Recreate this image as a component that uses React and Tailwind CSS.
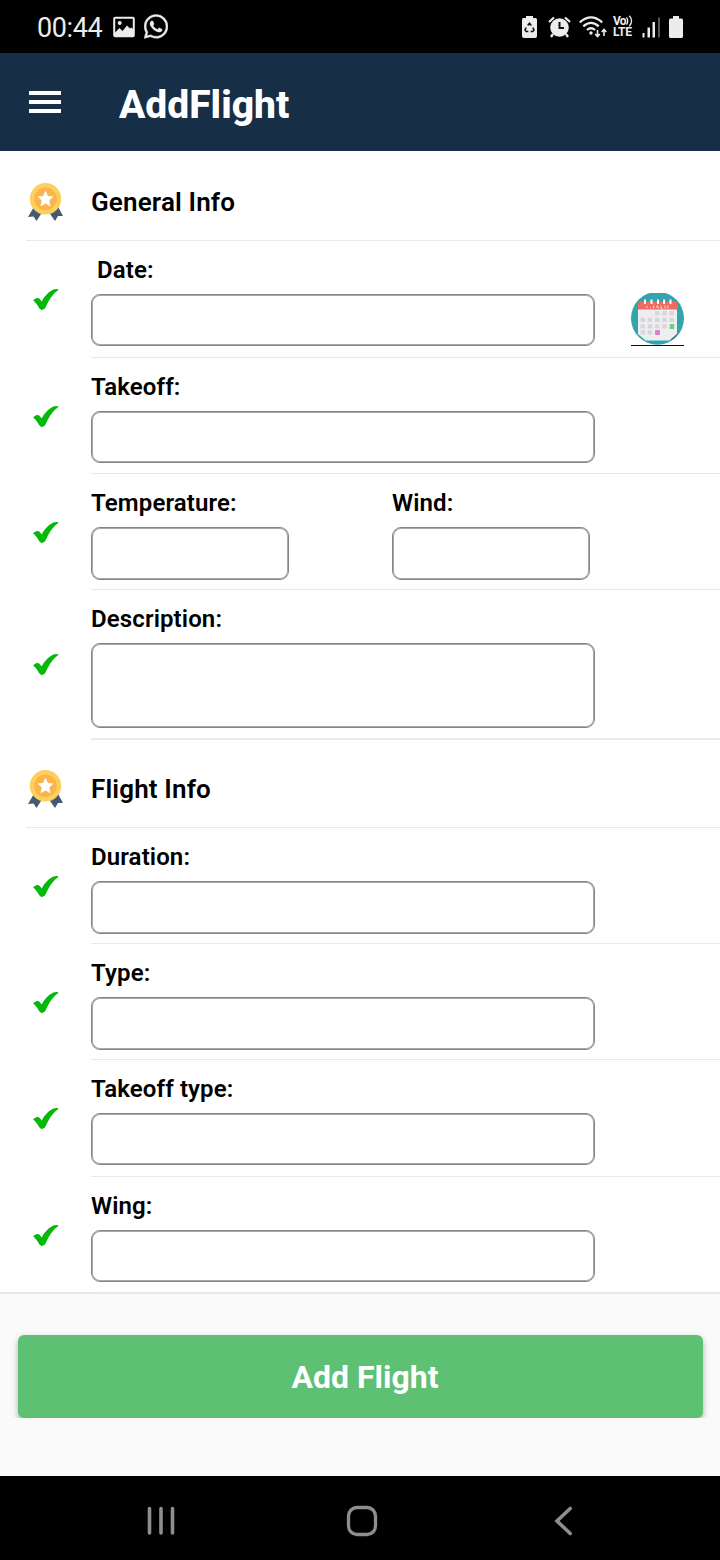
import React from "react";

function Medal() {
  return (
    <svg className="block h-[40px] w-[38px]" viewBox="0 0 38 40">
      <path d="M8 23 L1 35 L6.500 34.500 L9.500 39 L16 29Z M30 23 L36 34 L31 34 L28 39 L21 29Z" fill="#425b70" />
      <circle cx="18.500" cy="16.800" r="15.700" fill="#fdcf5c" />
      <circle cx="18.500" cy="16.800" r="11.300" fill="#f9b54c" />
      <path d="M18.500 8.500 L20.900 13.900 L26.500 14.500 L22.300 18.400 L23.500 24.500 L18.500 21.500 L13.500 24.500 L14.700 18.400 L10.500 14.500 L16.100 13.900Z" fill="#fff" />
    </svg>
  );
}

function Check() {
  return (
    <svg className="block h-[22px] w-[26px]" viewBox="0 0 26 22">
      <path d="M0 11.200 L3.500 9 L6 9.300 L8.800 12.500 C12 6 17 1.800 21 0.300 L25.300 0 L25 1.200 C20.500 4.500 18 8 15.500 12.500 C14 15.500 12.800 17.500 12 19.500 L8.500 21.200 L6 19 C5 16 2.500 13.500 0 11.200Z" fill="#06b80a" />
    </svg>
  );
}

const DAYS = [
  [24, 18], [31.3, 18], [38.5, 18],
  [9.500, 24.700], [16.700, 24.700], [24, 24.700], [31.300, 24.700], [38.500, 24.700],
  [9.500, 31.200], [16.700, 31.200], [24, 31.200], [31.300, 31.200],
  [9.500, 37.300], [16.700, 37.300],
];

function Calendar() {
  return (
    <svg className="block h-[53px] w-[53px]" viewBox="0 0 53 53">
      <circle cx="26.500" cy="25.300" r="26.500" fill="#32a4ac" />
      <path d="M7 16 H46 V41 L38.500 47.500 H14.500 L7 41Z" fill="#eeeef0" />
      <path d="M46.500 40 Q44 46 38.500 47.500 L43.500 43.500Z" fill="#4b5060" />
      <path d="M9 8.500 H44 Q46.500 8.500 46.500 11 V16.500 H7 V11 Q7 8.500 9 8.500Z" fill="#ee6b62" />
      <path d="M14 6.500 V11 M20.500 6.500 V11 M27 6.500 V11 M33 6.500 V11 M39.500 6.500 V11" stroke="#fff" strokeWidth="2" />
      <path d="M16 13 V15 M19 14.800 H20 M22.500 12.500 V15.500 M25 15 L26.500 12.500 L27.500 15.500 M30 12.500 V15.500 H31.500 M34 12.500 V15.500 M37 12.500 V15.500" stroke="#fbd5d1" strokeWidth="1" fill="none" />
      {DAYS.map(([x, y]) => (
        <rect key={`${x}-${y}`} x={x} y={y} width="4.500" height="4.300" rx="0.500" fill="#d7d6d8" />
      ))}
      <rect x="38.700" y="31" width="4.500" height="5" fill="#71cd83" />
      <rect x="24" y="37" width="5" height="5" rx="0.800" fill="#dc82bd" />
      <rect x="0" y="52" width="53" height="1" fill="#111" />
    </svg>
  );
}

function StatusBar() {
  return (
    <div className="flex h-[53px] items-center bg-black pl-[37px]">
      <span className="w-[76px] pt-[3px] text-[27px] leading-none tracking-[-0.4px] text-[#ececec]">00:44</span>
      <svg className="block h-[22px] w-[22px]" viewBox="0 0 22 22">
        <rect x="1.200" y="1.700" width="19.600" height="18.600" rx="1" fill="none" stroke="#ececec" strokeWidth="2" />
        <circle cx="6.700" cy="7" r="2" fill="#ececec" />
        <path d="M1.500 17 L6.500 12 L9.500 15 L14 9.500 L17 12.500 L18.500 11.500 L21 14 V20 H1.500Z" fill="#ececec" />
      </svg>
      <svg className="ml-[9px] block h-[25px] w-[24px]" viewBox="0 0 24 24" fill="#ececec" stroke="#ececec" strokeWidth="0.400">
        <path d="M17.472 14.382c-.297-.149-1.758-.867-2.030-.967-.273-.099-.471-.148-.670.150-.197.297-.767.966-.940 1.164-.173.199-.347.223-.644.075-.297-.150-1.255-.463-2.390-1.475-.883-.788-1.480-1.761-1.653-2.059-.173-.297-.018-.458.130-.606.134-.133.298-.347.446-.520.149-.174.198-.298.298-.497.099-.198.050-.371-.025-.520-.075-.149-.669-1.612-.916-2.207-.242-.579-.487-.500-.669-.510-.173-.008-.371-.010-.570-.010-.198 0-.520.074-.792.372-.272.297-1.040 1.016-1.040 2.479 0 1.462 1.065 2.875 1.213 3.074.149.198 2.096 3.200 5.077 4.487.709.306 1.262.489 1.694.625.712.227 1.360.195 1.871.118.571-.085 1.758-.719 2.006-1.413.248-.694.248-1.289.173-1.413-.074-.124-.272-.198-.570-.347m-5.421 7.403h-.004a9.870 9.870 0 01-5.031-1.378l-.361-.214-3.741.982.998-3.648-.235-.374a9.860 9.860 0 01-1.510-5.260c.001-5.450 4.436-9.884 9.888-9.884 2.640 0 5.122 1.030 6.988 2.898a9.825 9.825 0 012.893 6.994c-.003 5.450-4.437 9.884-9.885 9.884m8.413-18.297A11.815 11.815 0 0012.050 0C5.495 0 .160 5.335.157 11.892c0 2.096.547 4.142 1.588 5.945L.057 24l6.305-1.654a11.882 11.882 0 005.683 1.448h.005c6.554 0 11.890-5.335 11.893-11.893a11.821 11.821 0 00-3.480-8.413Z" />
      </svg>
      <div className="ml-auto flex items-center pr-[37px]">
        <svg className="block h-[22px] w-[15px]" viewBox="0 0 15 22">
          <path d="M4 0 H11 V2 H13.500 Q15 2 15 3.500 V20 Q15 22 13 22 H2 Q0 22 0 20 V3.500 Q0 2 1.500 2 H4Z" fill="#ececec" />
          <path d="M5.700 9.500 L7.500 7.300 L9.300 9.500 M10.800 11.500 L12 14 L10.800 15.500 H8.700 M4.200 11.500 L3 14 L4.200 15.500 H6.300" fill="none" stroke="#111" strokeWidth="1.600" />
        </svg>
        <svg className="ml-[11px] block h-[22px] w-[23px]" viewBox="0 0 23 22">
          <circle cx="11.500" cy="11.500" r="9.300" fill="#ececec" />
          <path d="M1 6 L6 1.500 M22 6 L17 1.500 M5 18 L3 21 M18 18 L20 21" stroke="#ececec" strokeWidth="2.300" />
          <path d="M11.500 6 V12 H16" fill="none" stroke="#111" strokeWidth="2" />
        </svg>
        <svg className="ml-[8px] block h-[22px] w-[28px]" viewBox="0 0 28 22" fill="none" stroke="#ececec" strokeWidth="2.300">
          <path d="M0.800 6.300 Q12 -3.500 23.200 6.300 M4.300 10.300 Q12 3.500 19.700 10.300 M8 14 Q12 10.500 16 14" />
          <circle cx="12" cy="17" r="1.700" fill="#ececec" stroke="none" />
          <path d="M18.500 14 V20.500 M16.200 18 L18.500 20.500 L20.800 18 M25 20 V13.500 M22.700 16 L25 13.500 L27.300 16" strokeWidth="1.600" />
        </svg>
        <div className="ml-[6px] flex w-[21px] flex-col text-[12px] font-bold leading-[12px] text-[#ececec]">
          <span className="flex h-[11px] items-center tracking-[-0.7px]">
            Vo
            <svg className="block h-[12px] w-[7px] shrink-0" viewBox="0 0 7 12" fill="none" stroke="#ececec" strokeWidth="1.300">
              <path d="M0.500 2.500 Q3 6 0.500 9.500 M3.300 0.800 Q7.800 6 3.300 11.200" />
            </svg>
          </span>
          <span className="tracking-[-0.2px]">LTE</span>
        </div>
        <svg className="ml-[8px] block h-[22px] w-[19px]" viewBox="0 0 19 22" fill="#ececec">
          <rect x="0.500" y="17" width="2" height="4.500" />
          <rect x="5.500" y="11.500" width="2.500" height="10" />
          <rect x="10.500" y="6" width="2.500" height="15.500" />
          <rect x="16" y="1.500" width="2" height="20" fill="#555" />
        </svg>
        <svg className="ml-[8px] block h-[22px] w-[14px]" viewBox="0 0 14 22">
          <path d="M4 0 H10 V2.500 H12.500 Q14 2.500 14 4 V20.500 Q14 22 12.500 22 H1.500 Q0 22 0 20.500 V4 Q0 2.500 1.500 2.500 H4Z" fill="#ececec" />
        </svg>
      </div>
    </div>
  );
}

function Section({ title, className }) {
  return (
    <div className={`pl-[26px] ${className}`}>
      <div className="flex h-full items-end border-b border-[#e9e9e9]">
        <div className="w-[65px] pb-[18px] pl-px"><Medal /></div>
        <h2 className="pb-[22px] text-[26px] font-semibold leading-[32px] tracking-[0.15px]">{title}</h2>
      </div>
    </div>
  );
}

function Row({ height = "h-[116px]", check = "pt-[48px]", line = "border-b", children }) {
  return (
    <div className={`flex ${height}`}>
      <div className={`w-[91px] shrink-0 pl-[33px] ${check}`}><Check /></div>
      <div className={`flex grow items-start border-[#e9e9e9] ${line}`}>{children}</div>
    </div>
  );
}

function Field({ label, width = "w-[504px]", height = "h-[52px]", indent = "" }) {
  return (
    <label className={`block shrink-0 pt-[15px] ${width}`}>
      <span className={`block h-[38px] text-[24px] font-semibold leading-[28px] tracking-[0.12px] ${indent}`}>{label}</span>
      <input className={`block rounded-[9px] border border-[#858585] bg-white shadow-[inset_0_0_0_1px_#a8a8a8] outline-none ${width} ${height}`} />
    </label>
  );
}

export default function App() {
  return (
    <div className="flex h-[1560px] w-[720px] flex-col overflow-hidden bg-[#fafafa] font-[Roboto,sans-serif] text-black">
      <StatusBar />
      <header className="flex h-[98px] items-center bg-[#172f46] pl-[29px] text-white">
        <button className="flex w-[32px] flex-col gap-[5px]" aria-label="Menu">
          <span className="h-[4px] w-full bg-white" />
          <span className="h-[4px] w-full bg-white" />
          <span className="h-[4px] w-full bg-white" />
        </button>
        <h1 className="ml-[58px] pt-[6px] text-[39px] font-extrabold leading-none">AddFlight</h1>
      </header>
      <main className="h-[1143px] border-b-2 border-[#e6e6e6] bg-white">
        <Section title="General Info" className="h-[90px]" />
        <Row height="h-[117px]">
          <Field label="Date:" indent="pl-[6px]" />
          <button className="ml-[36px] mt-[52px]" aria-label="Pick a date"><Calendar /></button>
        </Row>
        <Row><Field label="Takeoff:" /></Row>
        <Row>
          <Field label="Temperature:" width="w-[198px]" height="h-[53px]" />
          <div className="ml-[103px]"><Field label="Wind:" width="w-[198px]" height="h-[53px]" /></div>
        </Row>
        <Row height="h-[150px]" check="pt-[64px]" line="border-b-2"><Field label="Description:" height="h-[85px]" /></Row>
        <Section title="Flight Info" className="h-[88px]" />
        <Row><Field label="Duration:" height="h-[53px]" /></Row>
        <Row><Field label="Type:" height="h-[53px]" /></Row>
        <Row height="h-[117px]"><Field label="Takeoff type:" /></Row>
        <Row><Field label="Wing:" /></Row>
      </main>
      <div className="h-[124px] w-full overflow-hidden pl-[18px] pr-[17px] pt-[41px]">
        <button className="flex h-[83px] w-full items-center justify-center rounded-[6px] bg-[#5ec073] pl-[9px] text-[32px] font-bold leading-none text-white shadow-[0_3px_6px_rgba(0,0,0,0.3)]">
          Add Flight
        </button>
      </div>
      <nav className="mt-auto flex h-[84px] items-center bg-black pt-[6px]">
        <svg className="ml-[147px] block h-[30px] w-[29px]" viewBox="0 0 29 30" stroke="#8e8e8e" strokeWidth="3.600" strokeLinecap="round">
          <path d="M2.500 2.500 V27 M14 2.500 V27 M25.500 2.500 V27" />
        </svg>
        <svg className="ml-[170px] block h-[32px] w-[32px]" viewBox="0 0 32 32">
          <rect x="2.500" y="2.500" width="27" height="27" rx="8.500" fill="none" stroke="#8e8e8e" strokeWidth="3.300" />
        </svg>
        <svg className="ml-[176px] block h-[30px] w-[19px]" viewBox="0 0 19 30" fill="none" stroke="#8e8e8e" strokeWidth="3.600" strokeLinecap="round">
          <path d="M16.200 2.500 L3 15 L16.200 27.500" />
        </svg>
      </nav>
    </div>
  );
}
